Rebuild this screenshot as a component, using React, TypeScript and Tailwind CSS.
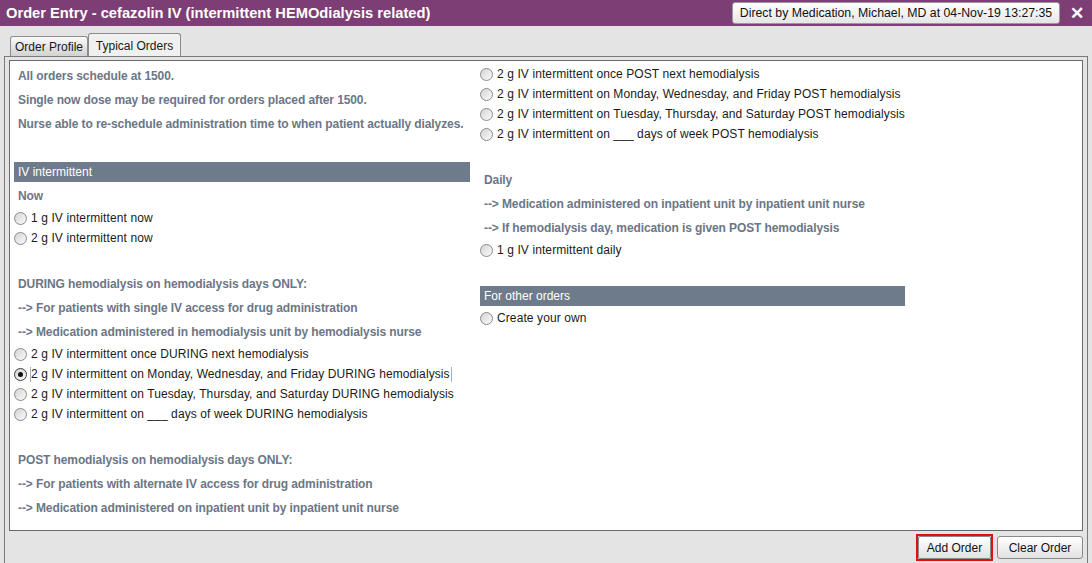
const font = { fontFamily: '"Liberation Sans", Arial, sans-serif' }

function Radio({ label, checked }: { label: string; checked?: boolean }) {
  return (
    <div className="h-[20px] flex items-center text-[12px] tracking-[0.1px] text-[#1a1a1a] whitespace-nowrap">
      <span
        className={
          'w-[13px] h-[13px] shrink-0 rounded-full border flex items-center justify-center bg-linear-to-br from-[#d4d4d4] to-[#fbfbfb] ' +
          (checked ? 'border-[#3c3c3c]' : 'border-[#8a8a8a]')
        }
      >
        {checked && <span className="w-[5px] h-[5px] rounded-full bg-[#111]" />}
      </span>
      {checked ? (
        <span className="ml-[3px] pr-[1px] leading-[15px] border-x border-[#9fb2c8]">{label}</span>
      ) : (
        <span className="ml-[4px]">{label}</span>
      )}
    </div>
  )
}

function Note({ children }: { children: React.ReactNode }) {
  return (
    <div className="h-[24px] leading-[24px] pl-[4px] text-[12px] tracking-[-0.1px] font-bold text-[#6b7686] whitespace-nowrap">
      {children}
    </div>
  )
}

function Bar({ children }: { children: React.ReactNode }) {
  return <div className="h-[20px] leading-[20px] pl-[4px] mb-[2px] bg-[#6e7b8a] text-white text-[12px]">{children}</div>
}

export default function App() {
  return (
    <div style={font} className="w-[1092px] h-[563px] overflow-hidden bg-[#e4e4e4] flex flex-col">
      <div className="h-[26px] shrink-0 bg-[#7c3e74] flex items-center pl-[6px] pr-[8px]">
        <div className="text-white font-bold text-[14.7px] whitespace-nowrap">
          Order Entry - cefazolin IV (intermittent HEMOdialysis related)
        </div>
        <div className="ml-auto shrink-0 h-[22px] w-[328px] rounded-[3px] border border-[#9a9a9a] bg-linear-to-b from-white to-[#e6e6e6] flex items-center justify-center text-[12.3px] text-[#111] whitespace-nowrap">
          Direct by Medication, Michael, MD at 04-Nov-19 13:27:35
        </div>
        <div className="ml-[10px] text-white font-bold text-[17px] leading-none">✕</div>
      </div>

      <div className="flex items-end pl-[10px] mt-[7px] h-[23px] shrink-0">
        <div className="h-[20px] w-[78px] border border-b-0 border-[#8c8c8c] rounded-t-[3px] bg-linear-to-b from-[#fafafa] to-[#d2d2d2] text-[12px] text-[#1a1a1a] flex items-center justify-center">
          Order Profile
        </div>
        <div className="h-[23px] w-[93px] border border-b-0 border-[#8c8c8c] rounded-t-[3px] bg-[#f0f0f0] text-[12px] text-[#1a1a1a] flex items-start pt-[3px] justify-center">
          Typical Orders
        </div>
      </div>

      <div className="flex-1 mx-[4px] border-x border-t border-[#7a7a7a] px-[4px] pt-[3px] flex flex-col">
        <div className="h-[471px] shrink-0 bg-white border border-[#6a6a6a] pt-[3px] pl-[4px] flex gap-[10px]">
          <div className="w-[456px] flex flex-col">
            <Note>All orders schedule at 1500.</Note>
            <Note>Single now dose may be required for orders placed after 1500.</Note>
            <Note>Nurse able to re-schedule administration time to when patient actually dialyzes.</Note>
            <div className="h-[26px]" />
            <Bar>IV intermittent</Bar>
            <Note>Now</Note>
            <Radio label="1 g IV intermittent now" />
            <Radio label="2 g IV intermittent now" />
            <div className="h-[24px]" />
            <Note>DURING hemodialysis on hemodialysis days ONLY:</Note>
            <Note>--&gt; For patients with single IV access for drug administration</Note>
            <Note>--&gt; Medication administered in hemodialysis unit by hemodialysis nurse</Note>
            <Radio label="2 g IV intermittent once DURING next hemodialysis" />
            <Radio checked label="2 g IV intermittent on Monday, Wednesday, and Friday DURING hemodialysis" />
            <Radio label="2 g IV intermittent on Tuesday, Thursday, and Saturday DURING hemodialysis" />
            <Radio label="2 g IV intermittent on ___ days of week DURING hemodialysis" />
            <div className="h-[24px]" />
            <Note>POST hemodialysis on hemodialysis days ONLY:</Note>
            <Note>--&gt; For patients with alternate IV access for drug administration</Note>
            <Note>--&gt; Medication administered on inpatient unit by inpatient unit nurse</Note>
          </div>
          <div className="w-[425px] flex flex-col">
            <Radio label="2 g IV intermittent once POST next hemodialysis" />
            <Radio label="2 g IV intermittent on Monday, Wednesday, and Friday POST hemodialysis" />
            <Radio label="2 g IV intermittent on Tuesday, Thursday, and Saturday POST hemodialysis" />
            <Radio label="2 g IV intermittent on ___ days of week POST hemodialysis" />
            <div className="h-[24px]" />
            <Note>Daily</Note>
            <Note>--&gt; Medication administered on inpatient unit by inpatient unit nurse</Note>
            <Note>--&gt; If hemodialysis day, medication is given POST hemodialysis</Note>
            <Radio label="1 g IV intermittent daily" />
            <div className="h-[26px]" />
            <Bar>For other orders</Bar>
            <Radio label="Create your own" />
          </div>
        </div>

        <div className="flex justify-end items-center mt-[3px] gap-[4px]">
          <div className="h-[27px] w-[77px] border-2 border-[#e01010] flex">
            <div className="flex-1 border border-[#8a8a8a] rounded-[2px] bg-linear-to-b from-white to-[#e2e2e2] flex items-center justify-center text-[12px] text-[#111]">
              Add Order
            </div>
          </div>
          <div className="h-[23px] w-[86px] border border-[#8a8a8a] rounded-[3px] bg-linear-to-b from-white to-[#e2e2e2] flex items-center justify-center text-[12px] text-[#111]">
            Clear Order
          </div>
        </div>
      </div>
    </div>
  )
}
